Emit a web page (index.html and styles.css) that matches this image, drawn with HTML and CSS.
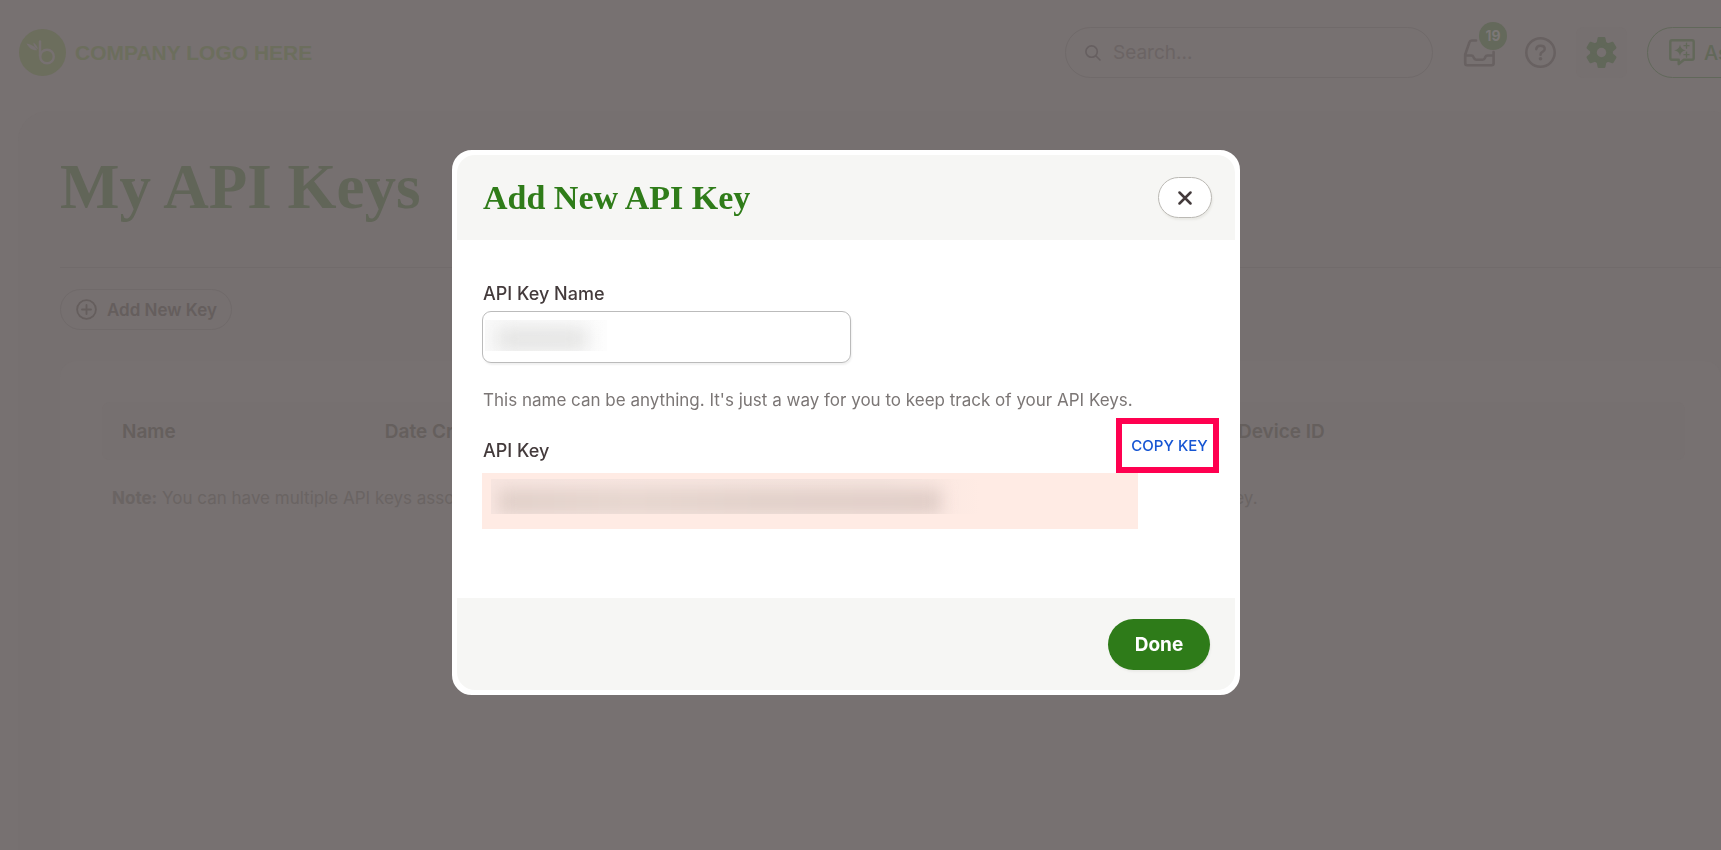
FILE: index.html
```html
<!DOCTYPE html>
<html lang="en">
<head>
<meta charset="utf-8">
<meta name="viewport" content="width=device-width, initial-scale=1">
<title>My API Keys</title>
<link rel="stylesheet" href="styles.css">
</head>
<body>
<div class="page">
  <header class="topbar">
    <a class="logo" href="#" aria-label="Company home">
      <svg class="logo-mark" viewBox="0 0 47 47" aria-hidden="true">
        <circle class="logo-disc" cx="23.500" cy="23.500" r="23.500"/>
        <path class="logo-line" d="M21 12.500V27"/>
        <circle class="logo-line" cx="28" cy="27.500" r="6.800"/>
        <path class="logo-leaf" d="M7.500 14.500c4 .5 8 2.300 10.800 6.700-5 .5-8.300-2.200-10.800-6.700zM14.300 13.500c2.600 1.600 4 3.600 4.700 6.700-3-1.500-4.500-3.600-4.700-6.700z"/>
      </svg>
      <span class="logo-text">COMPANY LOGO HERE</span>
    </a>
    <label class="search">
      <svg class="search-icon" viewBox="0 0 16 16" aria-hidden="true"><circle cx="6.600" cy="6.600" r="5.700"/><path d="M10.800 10.800l4.200 4.200"/></svg>
      <input class="search-input" type="search" placeholder="Search..." aria-label="Search">
    </label>
    <nav class="tools" aria-label="Tools">
      <button class="tool tool-inbox" aria-label="Inbox, 19 unread">
        <svg class="icon-inbox" viewBox="0 0 33 30" aria-hidden="true"><path d="M13 2.500H8.800q-1.800 0-2.400 1.800L2.200 16.500v8.700q0 2 2 2h24.400q2 0 2-2V14M2.200 17.500h6q1.700 0 2.300 1.600l.4 1q.6 1.600 2.300 1.600h6.400q1.700 0 2.300-1.600l.4-1q.6-1.600 2.300-1.600h6"/></svg>
        <span class="badge">19</span>
      </button>
      <button class="tool" aria-label="Help">
        <svg class="icon-help" viewBox="0 0 31 31" aria-hidden="true"><circle cx="15.500" cy="15.500" r="14.200"/><path d="M11.300 12.200q.3-3.500 4.200-3.500 4.200 0 4.200 3.200 0 1.900-2.200 3-2 .9-2 2.800"/><circle class="dot" cx="15.500" cy="21.700" r="1.800"/></svg>
      </button>
      <button class="tool tool-active" aria-label="Settings">
        <svg class="icon-gear" viewBox="0 0 31 31" aria-hidden="true">
          <mask id="hub"><rect width="31" height="31" fill="white"/><circle cx="15.500" cy="15.500" r="4.700" fill="black"/></mask>
          <g mask="url(#hub)"><circle cx="15.500" cy="15.500" r="11.300"/><path id="cog" d="M12.800 0h5.400q1 0 1.200 1l1 5v19l-1 5q-.2 1-1.200 1h-5.400q-1 0-1.200-1l-1-5V6l1-5q.2-1 1.200-1z"/><use href="#cog" transform="rotate(60 15.500 15.500)"/><use href="#cog" transform="rotate(120 15.500 15.500)"/></g>
        </svg>
      </button>
    </nav>
    <button class="ask">
      <svg class="icon-ask" viewBox="0 0 26 27" aria-hidden="true"><path class="bubble" d="M3 1.300h20q1.700 0 1.700 1.700v16q0 1.700-1.700 1.700h-8L9.700 25v-4.300H3q-1.700 0-1.700-1.700V3q0-1.700 1.700-1.700z"/><path class="spark" d="M11 5.500q.8 5 5.800 5.800-5 .8-5.800 5.800-.8-5-5.800-5.800 5-.8 5.800-5.800z"/><path class="plus" d="M17.500 4.200v5M15 6.700h5M17.500 13.200v5M15 15.700h5"/></svg>
      <span>As</span>
    </button>
  </header>

  <main class="panel">
    <h1 class="page-title">My API Keys</h1>
    <div class="actions">
      <button class="add-key">
        <svg class="icon-add" viewBox="0 0 21 21" aria-hidden="true"><circle cx="10.500" cy="10.500" r="9.400"/><path d="M10.500 6v9M6 10.500h9"/></svg>
        <span>Add New Key</span>
      </button>
    </div>
    <section class="card">
      <table class="keys">
        <thead>
          <tr><th class="col-name" scope="col">Name</th><th class="col-date" scope="col">Date Created</th><th scope="col">Device ID</th></tr>
        </thead>
      </table>
      <p class="note"><span><strong>Note:</strong> You can have multiple API keys associated</span> <span>key.</span></p>
    </section>
  </main>
</div>

<div class="overlay">
  <section class="modal" role="dialog" aria-modal="true" aria-labelledby="dialog-title">
    <header class="modal-head">
      <h2 class="modal-title" id="dialog-title">Add New API Key</h2>
      <button class="close" aria-label="Close"><svg viewBox="0 0 14 14" aria-hidden="true"><path d="M1.500 1.500l11 11M12.500 1.500l-11 11"/></svg></button>
    </header>
    <div class="modal-body">
      <label class="field-label" for="key-name">API Key Name</label>
      <div class="name-field">
        <input class="name-input" id="key-name" type="text">
        <span class="redacted redacted-name"></span>
      </div>
      <p class="hint">This name can be anything. It's just a way for you to keep track of your API Keys.</p>
      <div class="key-row">
        <span class="field-label">API Key</span>
        <button class="copy">COPY KEY</button>
      </div>
      <div class="key-value"><span class="redacted redacted-key"></span></div>
    </div>
    <footer class="modal-foot"><button class="done">Done</button></footer>
  </section>
</div>
</body>
</html>
```

FILE: styles.css
```css
* { box-sizing: border-box; }

body {
  margin: 0;
  background: #777171;
  color: #655f5e;
  font-family: Inter, "Liberation Sans", sans-serif;
  font-size: 17px;
}

button { font: inherit; color: inherit; background: none; border: 0; padding: 0; }
h1, h2, p { margin: 0; }
svg { display: block; flex: none; fill: none; stroke: currentColor; stroke-linecap: round; stroke-linejoin: round; }

.page { min-height: 100vh; display: flex; flex-direction: column; overflow: hidden; }

.topbar { display: flex; align-items: center; height: 111px; padding: 0 0 6px 19px; }
.logo { display: flex; align-items: center; gap: 9px; margin-right: auto; color: #6c6e5d; text-decoration: none; white-space: nowrap; }
.logo-mark { width: 47px; height: 47px; }
.logo-disc { fill: #6c6e5d; stroke: none; }
.logo-line { stroke: #777171; stroke-width: 2.500; }
.logo-leaf { fill: #777171; stroke: none; }
.logo-text { font-family: "Liberation Sans", sans-serif; font-weight: 700; font-size: 21px; }

.search { display: flex; align-items: center; gap: 12px; width: 368px; height: 51px; padding: 0 19px; border: 1px solid #706a6a; border-radius: 26px; }
.search-icon { width: 16px; height: 16px; color: #665f60; stroke-width: 1.600; }
.search-input { flex: 1; min-width: 0; padding: 0; border: 0; outline: 0; background: none; font: inherit; font-size: 19px; color: #6a6363; }
.search-input::placeholder { color: #6b6464; opacity: 1; }

.tools { display: flex; align-items: center; gap: 10px; margin: 0 20px 0 21px; }
.tool { position: relative; display: flex; align-items: center; justify-content: center; width: 51px; height: 51px; border-radius: 8px; color: #686161; }
.tool-active { background: #767070; color: #616759; }
.icon-inbox { width: 33px; height: 30px; stroke-width: 2.600; }
.icon-help { width: 31px; height: 31px; stroke-width: 2.500; }
.icon-help .dot { fill: currentColor; stroke: none; }
.icon-gear { width: 31px; height: 31px; fill: currentColor; stroke: none; }
.badge { position: absolute; top: -5px; right: -2px; width: 28px; height: 28px; border-radius: 14px; background: #64695b; color: #7c7877; font-size: 14px; font-weight: 700; line-height: 28px; text-align: center; }

.ask { display: flex; align-items: center; gap: 9px; flex: none; width: 140px; height: 51px; margin-right: -66px; padding-left: 21px; border: 1px solid #61685a; border-radius: 26px; color: #626859; font-size: 20px; font-weight: 500; }
.icon-ask { width: 26px; height: 27px; }
.bubble { stroke-width: 2.400; }
.spark { fill: currentColor; stroke: none; }
.plus { stroke-width: 1.300; }

.panel { flex: 1; display: flex; flex-direction: column; margin: 0 -20px 0 18px; padding: 40px 20px 0 42px; border-radius: 30px 30px 0 0; background: #767070; }
.page-title { padding-bottom: 44px; border-bottom: 1px solid #716b6b; color: #616558; font-family: "Liberation Serif", serif; font-size: 63px; font-weight: 700; line-height: 72px; }
.actions { padding: 21px 0 31px; }
.add-key { display: flex; align-items: center; gap: 10px; height: 41px; padding: 0 14px 0 15px; border: 1px solid #706a6a; border-radius: 21px; font-weight: 600; color: #655e5d; }
.icon-add { width: 21px; height: 21px; stroke-width: 1.800; }

.card { flex: 1; padding: 41px 36px 0 42px; border-radius: 16px 16px 0 0; background: #777171; }
.keys { width: 100%; table-layout: fixed; border-collapse: separate; border-spacing: 0; border-radius: 8px; background: #767070; }
.keys th { height: 58px; padding: 0 0 0 20px; text-align: left; font-size: 19px; font-weight: 600; color: #655f5d; }
.col-name { width: 16.600%; }
.col-date { width: 53.900%; }
.note { display: flex; justify-content: space-between; width: 73%; padding: 28px 0 0 10px; line-height: 20px; color: #6a6463; white-space: nowrap; }

.overlay { position: fixed; inset: 0; display: flex; align-items: center; justify-content: center; padding: 0 29px 5px 0; }
.modal { width: 788px; max-width: 100%; overflow: hidden; border: 5px solid #fff; border-radius: 20px; background: #fff; color: #433a3b; }
.modal-head { display: flex; align-items: center; justify-content: space-between; height: 85px; padding: 0 23px 0 26px; border-radius: 18px 18px 0 0; background: #f6f6f4; }
.modal-title { color: #2f7c19; font-family: "Liberation Serif", serif; font-size: 34px; font-weight: 700; line-height: 40px; }
.close { display: flex; align-items: center; justify-content: center; width: 54px; height: 41px; border: 1px solid #bbb9b4; border-radius: 21px; background: #fff; box-shadow: 1px 2px 2px #e9e9e5; }
.close svg { width: 14px; height: 14px; stroke-width: 2.500; }

.modal-body { padding: 41px 25px 69px; }
.field-label { display: block; padding-left: 1px; font-size: 18px; font-weight: 500; line-height: 26px; }
.name-field { position: relative; width: 369px; max-width: 100%; margin: 4px 0 27px; }
.name-input { display: block; width: 100%; height: 52px; padding: 0 12px; border: 1px solid #bbb; border-radius: 9px; background: #fff; font: inherit; box-shadow: 1px 2px 2px #f1f1f1; }
.redacted { position: absolute; overflow: hidden; }
.redacted::before { content: ""; position: absolute; }
.redacted-name { left: 3px; top: 9px; width: 122px; height: 31px; background: linear-gradient(90deg, #fafafa, #fdfdfd); }
.redacted-name::before { left: 12px; top: 7px; width: 90px; height: 24px; background: #e4e4e3; filter: blur(9px); }
.hint { padding-left: 1px; color: #7b7675; line-height: 20px; }
.key-row { display: flex; align-items: center; justify-content: space-between; padding: 8px 0 0; margin-right: -9px; }
.key-row .field-label { padding-top: 10px; }
.copy { width: 103px; height: 55px; padding-left: 4px; border: 6px solid #ff0050; background: #fff; color: #1655d3; font-size: 15px; font-weight: 500; white-space: nowrap; }
.key-value { position: relative; width: 656px; max-width: 100%; height: 56px; background: #ffebe4; }
.redacted-key { left: 9px; top: 6px; width: 489px; height: 35px; background: linear-gradient(90deg, #f8e6e1, #f6e5df 80%, #ffebe4); }
.redacted-key::before { left: 8px; top: 10px; width: 442px; height: 25px; background: linear-gradient(90deg, #e0cfc8, #e5d5ce 30%, #e1d0c9 60%, #e0cdc7); filter: blur(8px); }

.modal-foot { display: flex; align-items: center; justify-content: flex-end; height: 92px; padding: 0 25px; border-radius: 0 0 18px 18px; background: #f6f6f4; }
.done { width: 102px; height: 51px; border-radius: 26px; background: #2e7b19; color: #fff; font-size: 19px; font-weight: 700; box-shadow: 1px 2px 2px #ebebe8; }
```
